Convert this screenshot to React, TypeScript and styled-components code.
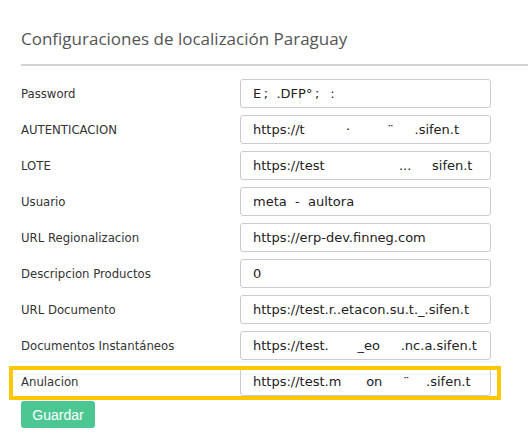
import React from 'react';
import styled, { createGlobalStyle } from 'styled-components';

const GlobalStyle = createGlobalStyle`
  html, body {
    margin: 0;
    padding: 0;
    background: #fff;
  }
`;

interface Field {
  label: string;
  value: string;
  highlighted?: boolean;
}

const fields: Field[] = [
  { label: 'Password', value: 'E\u2009;  .DFP\u00b0\u2009;\u2009  :' },
  { label: 'AUTENTICACION', value: 'https://t          \u00b7         \u00a8     .sifen.t' },
  { label: 'LOTE', value: 'https://test \u00a0                ...     sifen.t' },
  { label: 'Usuario', value: 'meta  -  aultora' },
  { label: 'URL Regionalizacion', value: 'https://erp-dev.finneg.com' },
  { label: 'Descripcion Productos', value: '0' },
  { label: 'URL Documento', value: 'https://test.r..etacon.su.t._.sifen.t' },
  { label: 'Documentos Instantáneos', value: 'https://test.       _eo     .nc.a.sifen.t' },
  { label: 'Anulacion', value: 'https://test.m      on     \u00a8    .sifen.t', highlighted: true }
];

const Page = styled.div`
  padding: 28px 0 0 21px;
  font-family: "DejaVu Sans", Verdana, sans-serif;
`;

const Title = styled.h3`
  margin: 0;
  padding-bottom: 14px;
  border-bottom: 2px solid #d3d3d7;
  font-family: "Open Sans", "Noto Sans", sans-serif;
  font-size: 17px;
  font-weight: 400;
  color: #555;
  line-height: 22px;
`;

const Form = styled.form`
  display: flex;
  flex-direction: column;
  gap: 6px;
  margin-top: 12px;
  width: 470px;
`;

const Row = styled.div<{ $highlighted?: boolean }>`
  position: relative;
  display: grid;
  grid-template-columns: 219px 251px;
  align-items: center;
  height: 30px;

  ${({ $highlighted }) => $highlighted && `
    &::after {
      content: '';
      position: absolute;
      top: 0;
      left: -12px;
      right: -10px;
      height: 34px;
      border: 4px solid #ffc700;
      box-sizing: border-box;
      pointer-events: none;
    }
  `}
`;

const Label = styled.label`
  font-family: "DejaVu Sans Condensed", "DejaVu Sans", sans-serif;
  font-size: 13px;
  color: #333;
`;

const Input = styled.input`
  box-sizing: border-box;
  height: 29px;
  width: 251px;
  padding: 0 12px;
  border: 1px solid #ccc;
  border-radius: 3px;
  font-family: "DejaVu Sans", Verdana, sans-serif;
  font-size: 13px;
  color: #222;
  white-space: pre;
  overflow: hidden;
`;

const SaveButton = styled.button`
  margin-top: 5px;
  width: 74px;
  height: 27px;
  border: none;
  border-radius: 3px;
  background: #4cc793;
  color: #fff;
  font-family: "Liberation Sans", Arial, sans-serif;
  font-size: 14px;
  cursor: pointer;
`;

function App (): React.ReactElement {
  return (
    <>
      <GlobalStyle />
      <Page>
        <Title>Configuraciones de localización Paraguay</Title>
        <Form onSubmit={(e) => e.preventDefault()}>
          {fields.map((f) => (
            <Row key={f.label} $highlighted={f.highlighted}>
              <Label>{f.label}</Label>
              <Input defaultValue={f.value} readOnly />
            </Row>
          ))}
        </Form>
        <SaveButton type='submit'>Guardar</SaveButton>
      </Page>
    </>
  );
}

export default App;
